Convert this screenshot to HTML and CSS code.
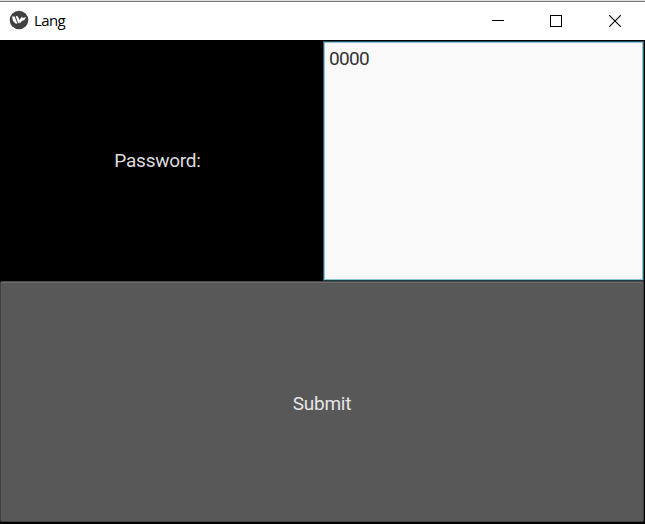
FILE: index.html
```html
<!DOCTYPE html>
<html lang="en">
<head>
<meta charset="utf-8">
<title>Lang</title>
<link rel="stylesheet" href="styles.css">
</head>
<body>
<div class="window">
  <header class="titlebar">
    <svg class="logo" viewBox="0 0 20 20"><circle cx="10" cy="10" r="9.3" fill="#404040"/><path d="M3 6.4 5.6 6.6 8.4 13.8 6.6 13.6 4 11ZM6.6 5.8 8.8 6.4 11 10.4 10.4 13.6 8.8 12.6ZM11 13.2 11 9.2 12.8 6.8 14 8 17.2 7 15.2 10.2 13.2 10.8Z" fill="#fff"/></svg>
    <span class="title">Lang</span>
    <div class="controls">
      <svg viewBox="0 0 12 12" shape-rendering="crispEdges"><path d="M0 5.5h12" stroke="#000"/></svg>
      <svg viewBox="0 0 12 12" shape-rendering="crispEdges"><path d="M.5.5h11v11H.5z" fill="none" stroke="#000"/></svg>
      <svg viewBox="0 0 12 12"><path d="M.2.2l11.6 11.6M11.8.2.2 11.8" stroke="#000" stroke-width="1.1"/></svg>
    </div>
  </header>
  <main class="content">
    <div class="row">
      <div class="label">Password:</div>
      <div class="field">0000</div>
    </div>
    <div class="submit">Submit</div>
  </main>
</div>
</body>
</html>
```
FILE: styles.css
```css
body {
  margin: 0;
  font-family: Roboto, sans-serif;
  font-size: 19px;
  line-height: 22px;
  letter-spacing: -0.25px;
}
.window {
  display: flex;
  flex-direction: column;
  width: 645px;
  height: 524px;
  background: #000;
}
.titlebar {
  box-sizing: border-box;
  display: flex;
  align-items: center;
  height: 40px;
  padding: 0 24px 0 9px;
  background: #fff;
  border-top: 1px solid #ddd;
  box-shadow: inset 0 1px #777;
}
.logo {
  width: 20px;
  height: 20px;
  margin-bottom: 1px;
}
.title {
  margin: 0 0 1px 5px;
  font-family: "Open Sans", sans-serif;
  font-size: 15px;
  letter-spacing: -0.6px;
  color: #000;
}
.controls {
  display: flex;
  gap: 46px;
  margin: 1px 0 0 auto;
}
.controls svg {
  width: 12px;
  height: 12px;
}
.controls svg:last-child {
  margin-left: 1px;
}
.content {
  flex: 1;
  display: grid;
  grid-template-rows: 241px 241px;
}
.row {
  display: grid;
  grid-template-columns: 323px 321px;
}
.label {
  display: flex;
  align-items: center;
  justify-content: center;
  padding: 1px 8px 0 0;
  color: #ddd;
}
.field {
  box-sizing: border-box;
  margin-top: 1px;
  padding: 6px 5px;
  border: 1px solid #2f6074;
  border-top-color: #235061;
  border-bottom-color: #163c4a;
  box-shadow: inset 0 0 0 1px #8dc2d8;
  background: #f9f9f9;
  color: #333;
  letter-spacing: -0.7px;
}
.submit {
  box-sizing: border-box;
  width: 644px;
  display: flex;
  align-items: center;
  justify-content: center;
  padding-top: 4px;
  border: 1px solid #414141;
  border-top-color: #4a4a4a;
  border-radius: 2px;
  box-shadow: inset 0 1px #6c6c6c;
  background: #585858;
  color: #e5e5e5;
}
```
